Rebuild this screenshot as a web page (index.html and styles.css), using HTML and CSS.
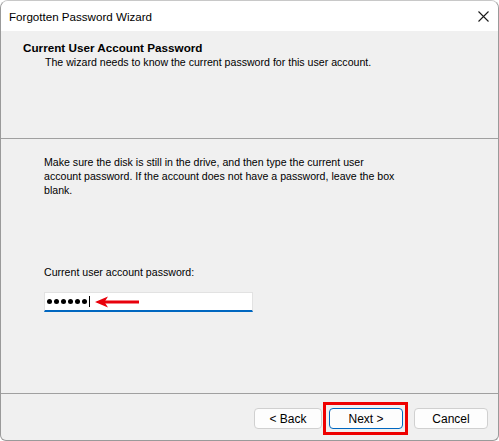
FILE: index.html
```html
<!DOCTYPE html>
<html>
<head>
<meta charset="utf-8">
<link rel="stylesheet" href="styles.css">
</head>
<body>
<div class="window">
  <div class="titlebar">
    <span class="title">Forgotten Password Wizard</span>
    <svg class="close" width="11" height="11" viewBox="0 0 11 11"><path d="M0.5 0.5 L10.5 10.5 M10.5 0.5 L0.5 10.5" stroke="#1a1a1a" stroke-width="1.1" fill="none"/></svg>
  </div>
  <div class="header">
    <div class="h-title">Current User Account Password</div>
    <div class="h-sub">The wizard needs to know the current password for this user account.</div>
  </div>
  <div class="content">
    <p class="desc">Make sure the disk is still in the drive, and then type the current user<br>account password. If the account does not have a password, leave the box<br>blank.</p>
    <div class="label">Current user account password:</div>
    <div class="field">
      <div class="input">
        <span class="dot"></span><span class="dot"></span><span class="dot"></span><span class="dot"></span><span class="dot"></span><span class="dot"></span>
        <span class="caret"></span>
      </div>
      <svg class="arrow" width="44" height="12" viewBox="0 0 44 12"><path d="M9 6 H44" stroke="#e8000b" stroke-width="3"/><path d="M0 6 L13 0.5 L9.5 6 L13 11.5 Z" fill="#e8000b"/></svg>
    </div>
  </div>
  <div class="footer">
    <button class="btn back">&lt; Back</button>
    <span class="highlight"><button class="btn default">Next &gt;</button></span>
    <button class="btn cancel">Cancel</button>
  </div>
</div>
</body>
</html>
```
FILE: styles.css
```css
html, body {
  margin: 0;
  padding: 0;
  background: #ffffff;
}
.window {
  width: 499px;
  height: 441px;
  box-sizing: border-box;
  border: 1px solid #9a9a9a;
  border-top-color: #c8c8c8;
  border-radius: 8px 8px 6px 6px;
  background: #f0f0f0;
  display: flex;
  flex-direction: column;
  overflow: hidden;
  font-family: "Liberation Sans", Arial, sans-serif;
  font-size: 10.6px;
  color: #000;
}
.titlebar {
  height: 30px;
  flex: none;
  background: #ffffff;
  display: flex;
  align-items: center;
  padding-left: 8px;
}
.title {
  font-size: 11.6px;
  color: #000;
}
.close {
  margin-left: auto;
  margin-right: 9px;
}
.header {
  height: 108px;
  flex: none;
  box-sizing: border-box;
  border-bottom: 1px solid #a0a0a0;
  padding: 10px 0 0 22px;
}
.h-title {
  font-weight: bold;
  font-size: 11.7px;
  line-height: 13px;
}
.h-sub {
  line-height: 13px;
  margin-top: 2px;
  padding-left: 22px;
}
.content {
  flex: 1;
  padding: 16px 0 0 43px;
}
.desc {
  margin: 0;
  line-height: 14px;
}
.label {
  margin-top: 68px;
  line-height: 14px;
}
.field {
  position: relative;
  margin-top: 13px;
  width: 209px;
}
.input {
  height: 20px;
  box-sizing: border-box;
  background: #ffffff;
  border: 1px solid #e2e2e2;
  border-bottom: 2px solid #0067c0;
  display: flex;
  align-items: center;
  padding-left: 2px;
  gap: 2px;
}
.dot {
  width: 5px;
  height: 5px;
  border-radius: 50%;
  background: #000;
}
.caret {
  width: 1px;
  height: 11px;
  background: #000;
}
.arrow {
  position: absolute;
  left: 51px;
  top: 4px;
}
.footer {
  height: 47px;
  flex: none;
  box-sizing: border-box;
  border-top: 1px solid #a0a0a0;
  display: flex;
  justify-content: flex-end;
  align-items: flex-start;
  padding: 8px 10px 0 0;
}
.btn {
  height: 21px;
  width: 74px;
  box-sizing: border-box;
  border: 1px solid #d0d0d0;
  border-radius: 4px;
  background: #fdfdfd;
  font-family: "Liberation Sans", Arial, sans-serif;
  font-size: 12px;
  color: #000;
  padding: 0;
}
.back {
  width: 68px;
  margin-top: 6px;
  margin-right: 1px;
}
.cancel {
  margin-top: 6px;
  margin-left: 6px;
}
.highlight {
  display: block;
  border: 3px solid #ee0000;
  padding: 3px 2px 3px 3px;
}
.default {
  display: block;
  border-color: #0067c0;
}
```
